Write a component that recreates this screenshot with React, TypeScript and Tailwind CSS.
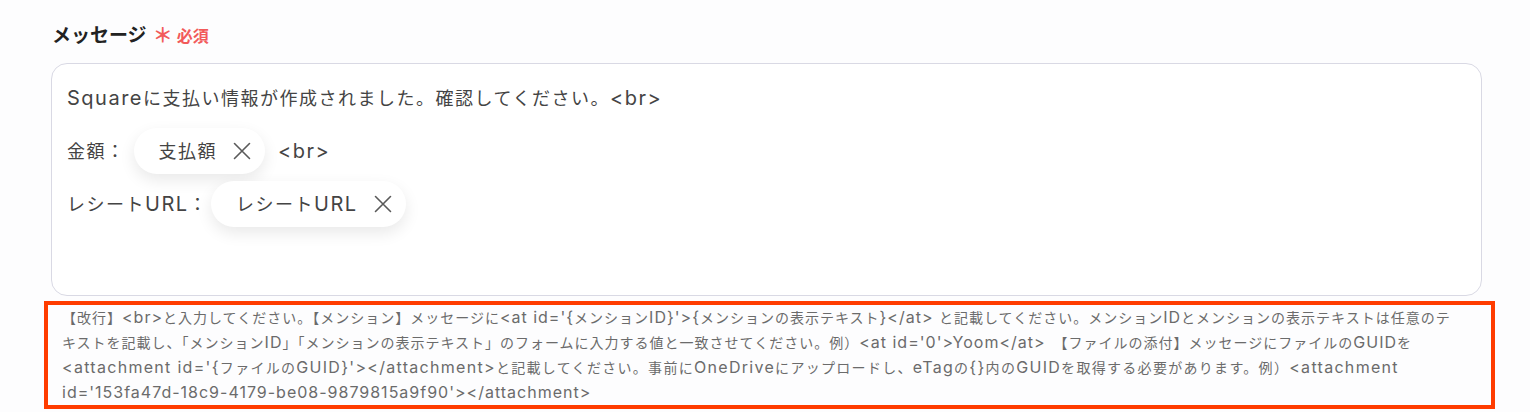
import React from 'react';

const font = { fontFamily: 'Inter, "Noto Sans CJK JP", "Noto Sans", sans-serif' };

// latin runs render a bit larger than the CJK text around them
const Mixed: React.FC<{ text: string; latin: string }> = ({ text, latin }) => (
  <>
    {text.split(/([\x20-\x7E]+)/).map((part, i) =>
      /^[\x20-\x7E]+$/.test(part) ? <span key={i} className={latin}>{part}</span> : part
    )}
  </>
);

const Chip: React.FC<{ label: string }> = ({ label }) => (
  <span className="inline-flex h-[46px] items-center gap-[16px] rounded-full bg-white pl-[25px] pr-[14px] shadow-[0_6px_16px_rgba(0,0,0,0.09)]">
    <span><Mixed text={label} latin="text-[20px]" /></span>
    <svg width="18" height="18" viewBox="0 0 18 18" fill="none" stroke="#5a5a5a" strokeWidth="1.6" strokeLinecap="round">
      <path d="M1.5 1.5 L16.5 16.5 M16.5 1.5 L1.5 16.5" />
    </svg>
  </span>
);

const helpLines = [
  "【改行】<br>と入力してください。【メンション】メッセージに<at id='{メンションID}'>{メンションの表示テキスト}</at> と記載してください。メンションIDとメンションの表示テキストは任意のテ",
  "キストを記載し、「メンションID」「メンションの表示テキスト」のフォームに入力する値と一致させてください。例）<at id='0'>Yoom</at>　【ファイルの添付】メッセージにファイルのGUIDを",
  "<attachment id='{ファイルのGUID}'></attachment>と記載してください。事前にOneDriveにアップロードし、eTagの{}内のGUIDを取得する必要があります。例）<attachment",
  "id='153fa47d-18c9-4179-be08-9879815a9f90'></attachment>",
];

export default function App() {
  return (
    <div className="min-h-[412px] w-[1530px] bg-[#fdfdfe] pl-[44px] pt-[22px]" style={font}>
      <div className="flex items-center gap-[6px] pl-[8px]">
        <span className="text-[19px] font-bold leading-[28px] text-[#222]">メッセージ</span>
        <span className="flex items-center gap-[4px] text-[16px] font-bold text-[#f25a5a]">
          <span className="text-[20px] leading-none">＊</span>
          <span>必須</span>
        </span>
      </div>

      <div className="ml-[7px] mt-[13px] h-[233px] w-[1431px] rounded-[16px] border border-[#d9d9e4] bg-white px-[15px] pt-[11px] text-[18px] tracking-[1.5px] text-[#444]">
        <div className="flex flex-col gap-[7px]">
          <div className="flex h-[46px] items-center">
            <span><Mixed text="Squareに支払い情報が作成されました。確認してください。<br>" latin="text-[20px]" /></span>
          </div>
          <div className="flex h-[46px] items-center gap-[8px]">
            <span>金額：</span>
            <Chip label="支払額" />
            <span className="ml-[5px] text-[20px]">&lt;br&gt;</span>
          </div>
          <div className="flex h-[46px] items-center gap-[3px]">
            <span><Mixed text="レシートURL：" latin="text-[20px]" /></span>
            <Chip label="レシートURL" />
          </div>
        </div>
      </div>

      <div className="mt-[5px] w-[1451px] border-4 border-[#ff3c00] pl-[14px] text-[14px] leading-[25px] tracking-[1px] text-[#6b6b6b]">
        {helpLines.map((l, i) => (
          <div key={i} className={i === 2 ? 'whitespace-pre tracking-[1.3px]' : 'whitespace-pre'}>
            <Mixed text={l} latin="text-[16px]" />
          </div>
        ))}
      </div>
    </div>
  );
}
